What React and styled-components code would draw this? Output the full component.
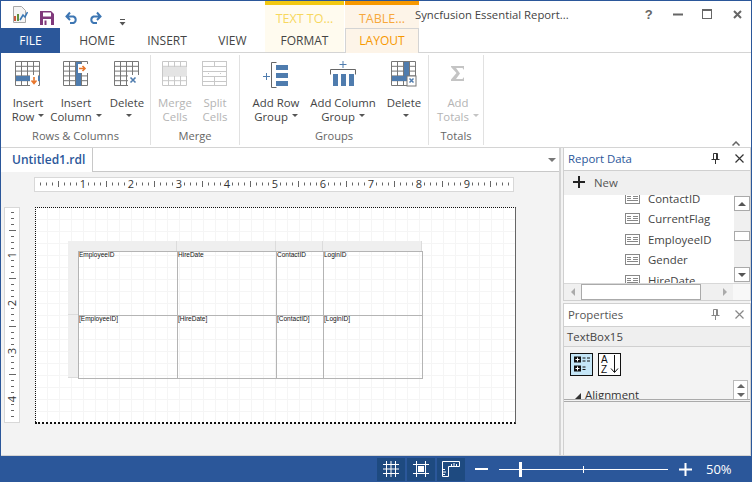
import React from 'react'
import styled, { createGlobalStyle } from 'styled-components'

const Global = createGlobalStyle`
	html, body { margin:0; padding:0; background:#fff; }
	body { font-family:"Open Sans","Noto Sans","Liberation Sans",sans-serif; }
`

const BLUE = '#2b579a'
const ICON = '#4f7cae'
const GRAY = '#777'

// ---- icons ----
const Grid = ({ x = 0.5, y = 0.5, w = 24, h = 24, cols = 4, rows = 5, color = GRAY }) => {
	const lines = []
	for (let i = 0; i <= cols; i++) lines.push(<line key={'c' + i} x1={x + (w * i) / cols} x2={x + (w * i) / cols} y1={y} y2={y + h} />)
	for (let i = 0; i <= rows; i++) lines.push(<line key={'r' + i} y1={y + (h * i) / rows} y2={y + (h * i) / rows} x1={x} x2={x + w} />)
	return <g stroke={color} strokeWidth="1">{lines}</g>
}

const InsertRowIcon = () => (
	<svg width="26" height="26">
		<Grid />
		<rect x="1" y="15" width="24" height="5" fill={ICON} />
		<rect x="15" y="14" width="8" height="11" fill="#fff" />
		<path d="M19 16v6M16.5 19.5L19 22.5l2.5-3" stroke="#e8762b" strokeWidth="1.6" fill="none" />
	</svg>
)
const InsertColIcon = () => (
	<svg width="26" height="26">
		<Grid />
		<rect x="13" y="1" width="5" height="24" fill={ICON} />
		<rect x="15" y="3" width="10" height="9" fill="#fff" />
		<path d="M16 7.5h6M19.5 5l2.5 2.5-2.5 2.5" stroke="#e8762b" strokeWidth="1.6" fill="none" />
	</svg>
)
const DeleteCellIcon = () => (
	<svg width="26" height="26">
		<Grid />
		<rect x="14" y="14" width="11" height="11" fill="#fff" />
		<path d="M16.5 16.5l5 5M21.5 16.5l-5 5" stroke={ICON} strokeWidth="1.6" />
	</svg>
)
const MergeIcon = () => (
	<svg width="26" height="26">
		<Grid color="#c8c8c8" />
		<rect x="1" y="6" width="24" height="9" fill="#e4e4e4" />
	</svg>
)
const SplitIcon = () => (
	<svg width="26" height="26">
		<g stroke="#c8c8c8" fill="none">
			<rect x="0.5" y="0.5" width="24" height="24" />
			<path d="M0 5.5h24M0 10.5h24M0 15.5h24M0 20.5h24M12.5 0v5M12.5 15v10M6.5 12v1M18.5 12v1" />
		</g>
	</svg>
)
const RowGroupIcon = () => (
	<svg width="26" height="28">
		<path d="M0 15.5h7M3.5 12v7" stroke={ICON} fill="none" />
		<path d="M13.5 1.5h-5v25h5" stroke="#666" fill="none" />
		<rect x="13" y="4" width="12" height="5" fill={ICON} />
		<rect x="13" y="12" width="12" height="5" fill={ICON} />
		<rect x="13" y="20" width="12" height="5" fill={ICON} />
	</svg>
)
const ColGroupIcon = () => (
	<svg width="28" height="26">
		<path d="M14 0v7M10.5 3.5h7" stroke={ICON} fill="none" />
		<path d="M1.5 13.5v-5h25v5" stroke="#666" fill="none" />
		<rect x="4" y="13" width="5" height="12" fill={ICON} />
		<rect x="12" y="13" width="5" height="12" fill={ICON} />
		<rect x="20" y="13" width="5" height="12" fill={ICON} />
	</svg>
)
const DeleteGroupIcon = () => (
	<svg width="26" height="26">
		<Grid />
		<rect x="13" y="1" width="5" height="18" fill={ICON} />
		<rect x="1" y="15" width="15" height="5" fill={ICON} />
		<rect x="16" y="15" width="9" height="10" fill="#fff" stroke="#777" />
		<path d="M18.5 17.5l4 4M22.5 17.5l-4 4" stroke={ICON} strokeWidth="1.5" />
	</svg>
)
const SigmaIcon = () => (
	<svg width="16" height="22">
		<path transform="translate(0 4)" d="M1 1h13v4l-1.5-2H6l4 5.5L6 14h6.5L14 12v4H1v-1.5l5.5-6.5L1 2z" fill="#c4c4c4" />
	</svg>
)
const AppIcon = () => (
	<svg width="16" height="18">
		<path d="M1.5 0.5h8l4 4v12h-12z" fill="#f4f4f4" stroke="#a8a8a8" />
		<rect x="2" y="10" width="2" height="5" fill="#c9593a" />
		<rect x="5" y="8" width="2" height="7" fill="#5f8f3e" />
		<path d="M8 14l3-5 2 2 2.5-5" stroke="#3b78b5" strokeWidth="1.6" fill="none" />
	</svg>
)
const SaveIcon = () => (
	<svg width="14" height="14">
		<path d="M0 0h11l3 3v11H0z" fill="#80397b" />
		<rect x="3" y="1.5" width="8" height="4" fill="#fff" />
		<rect x="3" y="8" width="8" height="6" fill="#fff" />
		<rect x="4.5" y="9.5" width="2" height="4.5" fill="#80397b" />
	</svg>
)
const UndoIcon = ({ flip }) => (
	<svg width="14" height="13" style={flip ? { transform: 'scaleX(-1)' } : undefined}>
		<path d="M1.5 5.5h7a3.5 3.5 0 0 1 0 6.5H5M5 1.5L1.5 5.5 5 9" stroke="#3d76b3" strokeWidth="2" fill="none" />
	</svg>
)
const QatMore = () => (
	<svg width="7" height="7">
		<path d="M1 0.5h5" stroke="#555" />
		<path d="M0.5 3h6L3.5 6.5z" fill="#555" />
	</svg>
)
const Caption = () => (
	<>
		<CaptionBtn>
			<HelpMark>?</HelpMark>
		</CaptionBtn>
		<CaptionBtn>
			<svg width="10" height="3"><rect width="10" height="2" y="0.5" fill="#666" /></svg>
		</CaptionBtn>
		<CaptionBtn>
			<svg width="11" height="11"><rect x="0.5" y="0.5" width="9" height="9" fill="none" stroke="#666" /><rect width="10" height="2" fill="#666" /></svg>
		</CaptionBtn>
		<CaptionBtn>
			<svg width="9" height="9"><path d="M1 1l7 7M8 1l-7 7" stroke="#666" strokeWidth="2" /></svg>
		</CaptionBtn>
	</>
)
const Pin = ({ color = '#333' }) => (
	<svg width="9" height="11">
		<path d="M2.5 0.5h4v6h-4zM5.5 1v5.5M0.5 6.5h8M4.5 7v4" stroke={color} fill="none" />
	</svg>
)
const Cross = ({ color = '#333' }) => (
	<svg width="9" height="9"><path d="M0.5 0.5l8 8M8.5 0.5l-8 8" stroke={color} strokeWidth="1.2" /></svg>
)
const Tri = ({ dir = 'down', color = '#555', s = 3 }) => {
	const d = {
		down: `M0 0h${s * 2}L${s} ${s}z`,
		up: `M0 ${s}h${s * 2}L${s} 0z`,
		left: `M${s} 0v${s * 2}L0 ${s}z`,
		right: `M0 0v${s * 2}L${s} ${s}z`,
	}[dir]
	const sideways = dir === 'left' || dir === 'right'
	return <svg width={sideways ? s : s * 2} height={sideways ? s * 2 : s}><path d={d} fill={color} /></svg>
}
const FieldIcon = () => (
	<svg width="15" height="11">
		<rect x="0.5" y="0.5" width="14" height="10" fill="#fff" stroke="#888" />
		<path d="M2 3.5h4M8 3.5h5M2 5.5h4M8 5.5h5M2 7.5h11" stroke="#888" />
	</svg>
)
const CategoryIcon = () => (
	<svg width="21" height="20">
		<rect x="3" y="2.5" width="7" height="6" fill="#111" />
		<rect x="3" y="11.5" width="7" height="6" fill="#111" />
		<path d="M6.5 3.5v4M4.5 5.5h4M6.5 12.5v4M4.5 14.5h4" stroke="#fff" />
		<path d="M11.5 4h3M16 4h3M11.5 7h3M16 7h3M11.5 13h3M11.5 15.5h3" stroke="#111" />
	</svg>
)
const SortIcon = () => (
	<svg width="21" height="20">
		<text x="2" y="9" fontFamily="Liberation Sans" fontSize="10" fill="#111">A</text>
		<text x="2" y="19" fontFamily="Liberation Sans" fontSize="10" fill="#111">Z</text>
		<path d="M15.5 1v17M12 14.5l3.5 4 3.5-4" stroke="#111" fill="none" />
	</svg>
)
const GridLinesIcon = () => (
	<svg width="16" height="16">
		<path d="M3.5 0v16M8 0v16M12.5 0v16M0 3.5h16M0 8h16M0 12.5h16" stroke="#fff" strokeWidth="1" />
	</svg>
)
const SnapIcon = () => (
	<svg width="16" height="16">
		<path d="M3.5 0v16M12.5 0v16M0 3.5h16M0 12.5h16" stroke="#fff" />
		<rect x="5" y="5" width="6" height="6" fill="#fff" />
	</svg>
)
const RulerIcon = () => (
	<svg width="18" height="16">
		<path d="M0.5 0.5h17v5h-11v10h-6z" fill="none" stroke="#fff" />
		<path d="M9.5 3v2M12 2v3M14.5 3v2M1 8.5h2M1 11h3M1 13.5h2" stroke="#fff" />
	</svg>
)

const HRuler = () => {
	const ticks = []
	for (let i = 1; i < 80; i++) {
		const x = 6 * i - 1
		if (i % 8 === 0) continue
		ticks.push(<line key={i} x1={x + 0.5} x2={x + 0.5} y1={i % 4 === 0 ? 4 : 5.5} y2={i % 4 === 0 ? 10 : 8.5} stroke="#666" />)
	}
	return (
		<svg width="478" height="14">
			{ticks}
			{[1, 2, 3, 4, 5, 6, 7, 8, 9].map((n) => (
				<text key={n} x={48 * n} y="11" textAnchor="middle" fontFamily="Open Sans" fontSize="11" fill="#333">{n}</text>
			))}
		</svg>
	)
}
const VRuler = () => {
	const ticks = []
	for (let i = 1; i < 36; i++) {
		const y = 6 * i - 2
		if (i % 8 === 0) continue
		ticks.push(<line key={i} y1={y + 0.5} y2={y + 0.5} x1={i % 4 === 0 ? 4 : 6} x2={i % 4 === 0 ? 11 : 9} stroke="#666" />)
	}
	return (
		<svg width="14" height="214">
			{ticks}
			{[1, 2, 3, 4].map((n) => (
				<text key={n} transform={`translate(11 ${48 * n - 1}) rotate(-90)`} textAnchor="middle" fontFamily="Open Sans" fontSize="11" fill="#333">{n}</text>
			))}
		</svg>
	)
}

// ---- data ----
const groups = [
	{
		label: 'Rows & Columns', width: 150, pad: 3,
		items: [
			{ icon: <InsertRowIcon />, l1: 'Insert', l2: 'Row', caret: true, w: 48 },
			{ icon: <InsertColIcon />, l1: 'Insert', l2: 'Column', caret: true, w: 48 },
			{ icon: <DeleteCellIcon />, l1: 'Delete', l2: '', caret: true, w: 50, ml: 2 },
		],
	},
	{
		label: 'Merge', width: 89, off: true, pad: 2,
		items: [
			{ icon: <MergeIcon />, l1: 'Merge', l2: 'Cells', w: 44 },
			{ icon: <SplitIcon />, l1: 'Split', l2: 'Cells', w: 36 },
		],
	},
	{
		label: 'Groups', width: 189, pad: 6,
		items: [
			{ icon: <RowGroupIcon />, l1: 'Add Row', l2: 'Group', caret: true, w: 60 },
			{ icon: <ColGroupIcon />, l1: 'Add Column', l2: 'Group', caret: true, w: 74 },
			{ icon: <DeleteGroupIcon />, l1: 'Delete', l2: '', caret: true, w: 48 },
		],
	},
	{
		label: 'Totals', width: 55, off: true, pad: 5,
		items: [{ icon: <SigmaIcon />, l1: 'Add', l2: 'Totals', caret: true, w: 48 }],
	},
]
const fields = ['ContactID', 'CurrentFlag', 'EmployeeID', 'Gender', 'HireDate']
const cols = [
	{ w: 99, head: 'EmployeeID', bind: '[EmployeeID]' },
	{ w: 99, head: 'HireDate', bind: '[HireDate]' },
	{ w: 47, head: 'ContactID', bind: '[ContactID]' },
	{ w: 99, head: 'LoginID', bind: '[LoginID]' },
]

export default function App() {
	return (
		<Window>
			<Global />
			<TitleRow>
				<Qat>
					<QatSlot $w={28} $top={5}><AppIcon /></QatSlot>
					<QatSlot $w={25} $top={10}><SaveIcon /></QatSlot>
					<QatSlot $w={23} $top={10}><UndoIcon /></QatSlot>
					<QatSlot $w={31} $top={10}><UndoIcon flip /></QatSlot>
					<QatSlot $w={10} $top={13}><QatMore /></QatSlot>
				</Qat>
				<Context $bar="#f2c811" $bg="#fffbef" $color="#f7d85e" $w={79} $left={128}>TEXT TO...</Context>
				<Context $bar="#f79800" $bg="#fdf4e8" $color="#f7a83c" $w={74}>TABLE...</Context>
				<AppTitle>Syncfusion Essential Report...</AppTitle>
				<CaptionBox><Caption /></CaptionBox>
			</TitleRow>
			<TabRow>
				<FileTab>FILE</FileTab>
				<Tab $w={74}>HOME</Tab>
				<Tab $w={66}>INSERT</Tab>
				<Tab $w={65}>VIEW</Tab>
				<Tab $w={79} $bg="#fffbef">FORMAT</Tab>
				<ActiveTab>LAYOUT</ActiveTab>
			</TabRow>
			<Ribbon>
				{groups.map((g) => (
					<Group key={g.label} $w={g.width}>
						<GroupItems $pad={g.pad}>
							{g.items.map((it, i) => (
								<RibbonBtn key={i} $w={it.w} $ml={it.ml} $off={g.off}>
									<BtnIcon>{it.icon}</BtnIcon>
									<span>{it.l1}</span>
									<BtnLine>
										{it.l2}
										{it.caret && <Caret><Tri color={g.off ? '#c4c4c4' : '#555'} /></Caret>}
									</BtnLine>
								</RibbonBtn>
							))}
						</GroupItems>
						<GroupLabel>{g.label}</GroupLabel>
					</Group>
				))}
				<Collapse>
					<svg width="8" height="5"><path d="M0.5 4.5L4 1l3.5 3.5" stroke="#666" strokeWidth="1.5" fill="none" /></svg>
				</Collapse>
			</Ribbon>
			<Body>
				<Main>
					<DocBar>
						<DocTab>Untitled1.rdl</DocTab>
						<DocFill><Tri color="#777" s={4} /></DocFill>
					</DocBar>
					<Surface>
						<HRulerBox><HRuler /></HRulerBox>
						<SheetRow>
							<VRulerBox><VRuler /></VRulerBox>
							<Paper>
								<RdlTable>
									<ColHandles>
										<Corner />
										{cols.map((c) => <ColHandle key={c.head} $w={c.w} />)}
									</ColHandles>
									<RowBody>
										<RowHandles>
											<RowHandle $h={64} />
											<RowHandle $h={63} />
										</RowHandles>
										<Cells>
											<CellRow $h={64}>
												{cols.map((c) => <Cell key={c.head} $w={c.w}>{c.head}</Cell>)}
											</CellRow>
											<CellRow $h={63}>
												{cols.map((c) => <Cell key={c.bind} $w={c.w}>{c.bind}</Cell>)}
											</CellRow>
										</Cells>
									</RowBody>
								</RdlTable>
							</Paper>
						</SheetRow>
					</Surface>
				</Main>
				<Side>
					<Panel $h={153}>
						<PanelHead $active>
							<span>Report Data</span>
							<PanelBtns><Pin /><Cross /></PanelBtns>
						</PanelHead>
						<NewBar>
							<svg width="14" height="14"><path d="M7 1v12M1 7h12" stroke="#222" strokeWidth="2" /></svg>
							<span>New</span>
						</NewBar>
						<ListArea>
							<List>
								<FieldsWrap>
									{fields.map((f) => (
										<Field key={f}><FieldIcon /><span>{f}</span></Field>
									))}
								</FieldsWrap>
							</List>
							<VScroll>
								<ScrollBtn><Tri dir="up" s={4} /></ScrollBtn>
								<ScrollTrack><Thumb /></ScrollTrack>
								<ScrollBtn><Tri s={4} /></ScrollBtn>
							</VScroll>
						</ListArea>
						<HScroll>
							<HArrow $w={17}><Tri dir="left" color="#aaa" s={4} /></HArrow>
							<HThumb />
							<HGap />
							<HArrow $w={17}><Tri dir="right" color="#aaa" s={4} /></HArrow>
							<HCorner />
						</HScroll>
					</Panel>
					<Panel $h={152} $second>
						<PanelHead>
							<span>Properties</span>
							<PanelBtns><Pin color="#888" /><Cross color="#888" /></PanelBtns>
						</PanelHead>
						<ObjectName>TextBox15</ObjectName>
						<PropGrid>
							<PropTools>
								<PropTool $on><CategoryIcon /></PropTool>
								<PropTool><SortIcon /></PropTool>
							</PropTools>
							<PropRow>
								<PropCat>
									<svg width="7" height="7"><path d="M7 0v7H0z" fill="#333" /></svg>
									<span>Alignment</span>
								</PropCat>
								<MiniScroll>
									<MiniBtn><Tri dir="up" color="#666" s={4} /></MiniBtn>
									<MiniBtn><Tri color="#666" s={4} /></MiniBtn>
								</MiniScroll>
							</PropRow>
						</PropGrid>
						<PropHelp />
					</Panel>
				</Side>
			</Body>
			<StatusBar>
				<StatusBtn><GridLinesIcon /></StatusBtn>
				<StatusBtn><SnapIcon /></StatusBtn>
				<StatusBtn><RulerIcon /></StatusBtn>
				<ZoomMinus><svg width="13" height="3"><rect width="13" height="2" fill="#fff" /></svg></ZoomMinus>
				<Slider>
					<SliderThumb />
					<SliderMid />
				</Slider>
				<ZoomPlus>
					<svg width="13" height="13"><path d="M6.5 0v13M0 6.5h13" stroke="#fff" strokeWidth="2" /></svg>
				</ZoomPlus>
				<ZoomText>50%</ZoomText>
			</StatusBar>
		</Window>
	)
}

// ---- styles ----
const Window = styled.div`
	width:752px;
	height:482px;
	box-sizing:border-box;
	border-top:1px solid ${BLUE};
	border-left:1px solid ${BLUE};
	border-right:1px solid ${BLUE};
	display:flex;
	flex-direction:column;
	overflow:hidden;
	background:#fff;
	color:#444;
	font-size:11.4px;
`
const TitleRow = styled.div`
	height:27px;
	display:flex;
	flex-shrink:0;
`
const Qat = styled.div`
	display:flex;
	width:136px;
	flex-shrink:0;
	padding-left:11px;
	box-sizing:border-box;
`
const QatSlot = styled.div`
	width:${(p) => p.$w}px;
	flex-shrink:0;
	padding-top:${(p) => p.$top}px;
	box-sizing:border-box;
`
const Context = styled.div`
	width:${(p) => p.$w}px;
	flex-shrink:0;
	margin-left:${(p) => p.$left || 0}px;
	margin-right:1px;
	box-sizing:border-box;
	border-top:4px solid ${(p) => p.$bar};
	background:${(p) => p.$bg};
	color:${(p) => p.$color};
	font-size:12.5px;
	text-align:center;
	padding-top:5px;
`
const AppTitle = styled.div`
	width:229px;
	flex-shrink:0;
	margin-left:-5px;
	padding-top:6px;
	color:#444;
	font-size:11.3px;
	white-space:nowrap;
`
const CaptionBox = styled.div`
	display:flex;
	flex-shrink:0;
	width:118px;
	margin-left:-10px;
`
const CaptionBtn = styled.div`
	width:29.5px;
	height:26px;
	flex-shrink:0;
	display:flex;
	align-items:center;
	justify-content:center;
`
const HelpMark = styled.span`
	font-family:"Liberation Sans",sans-serif;
	font-weight:700;
	font-size:13px;
	line-height:13px;
	color:#666;
`
const TabRow = styled.div`
	height:24px;
	display:flex;
	flex-shrink:0;
	border-bottom:1px solid #d4d4d4;
`
const FileTab = styled.div`
	width:59px;
	height:25px;
	background:${BLUE};
	color:#fff;
	font-size:12px;
	line-height:25px;
	text-align:center;
`
const Tab = styled.div`
	width:${(p) => p.$w}px;
	background:${(p) => p.$bg || 'transparent'};
	font-size:12px;
	line-height:25px;
	text-align:center;
	color:#444;
	margin-right:${(p) => (p.$bg ? 1 : 0)}px;
`
const ActiveTab = styled.div`
	width:74px;
	box-sizing:border-box;
	height:25px;
	background:#fdf4e8;
	border:1px solid #d4d4d4;
	border-bottom:none;
	color:#f79800;
	font-size:12px;
	line-height:24px;
	text-align:center;
`
const Ribbon = styled.div`
	height:94px;
	display:flex;
	flex-shrink:0;
	position:relative;
	box-sizing:border-box;
	padding-top:2px;
`
const Group = styled.div`
	width:${(p) => p.$w}px;
	box-sizing:border-box;
	border-right:1px solid #e1e1e1;
	height:90px;
	display:flex;
	flex-direction:column;
	flex-shrink:0;
`
const GroupItems = styled.div`
	display:flex;
	flex:1;
	padding-left:${(p) => p.$pad}px;
`
const RibbonBtn = styled.div`
	width:${(p) => p.$w}px;
	margin-left:${(p) => p.$ml || 0}px;
	flex-shrink:0;
	display:flex;
	flex-direction:column;
	align-items:center;
	color:${(p) => (p.$off ? '#b4b4b4' : '#444')};
	line-height:14px;
	white-space:nowrap;
`
const BtnIcon = styled.div`
	height:41px;
	padding-top:6px;
	box-sizing:border-box;
	display:flex;
	align-items:flex-start;
`
const BtnLine = styled.div`
	display:flex;
	align-items:center;
	min-height:14px;
`
const Caret = styled.span`
	margin-left:4px;
	margin-bottom:3px;
	display:inline-flex;
`
const GroupLabel = styled.div`
	text-align:center;
	color:#666;
	font-size:11.1px;
	line-height:15px;
	padding-bottom:2px;
`
const Collapse = styled.div`
	position:absolute;
	right:11px;
	top:81px;
`
const Body = styled.div`
	flex:1;
	display:flex;
	min-height:0;
	border-top:1px solid #d4d4d4;
	border-bottom:1px solid #d4d4d4;
	background:#f3f3f3;
`
const Main = styled.div`
	width:560px;
	flex-shrink:0;
	display:flex;
	flex-direction:column;
	border-right:2px solid #d4d4d4;
	box-sizing:border-box;
`
const DocBar = styled.div`
	height:24px;
	display:flex;
	flex-shrink:0;
	background:#fff;
`
const DocTab = styled.div`
	width:92px;
	box-sizing:border-box;
	padding-left:11px;
	color:${BLUE};
	font-size:12px;
	line-height:23px;
	font-weight:600;
	border-right:1px solid #c8c8c8;
`
const DocFill = styled.div`
	flex:1;
	border-bottom:1px solid #c8c8c8;
	display:flex;
	align-items:center;
	justify-content:flex-end;
	padding-right:3px;
	background:#fff;
`
const Surface = styled.div`
	flex:1;
	display:flex;
	flex-direction:column;
	padding-top:5px;
`
const HRulerBox = styled.div`
	margin-left:33px;
	width:480px;
	height:15px;
	background:#fff;
	border:1px solid #d8d8d8;
	box-sizing:border-box;
	svg { display:block; margin-top:-1px; }
`
const SheetRow = styled.div`
	display:flex;
	margin-top:15px;
	padding-left:3px;
`
const VRulerBox = styled.div`
	width:16px;
	height:216px;
	background:#fff;
	border:1px solid #d8d8d8;
	box-sizing:border-box;
	svg { display:block; }
`
const Paper = styled.div`
	width:481px;
	height:217px;
	margin-left:15px;
	flex-shrink:0;
	box-sizing:border-box;
	position:relative;
	border-top:1px dotted #111;
	border-left:1px dotted #111;
	border-bottom:2px dotted #111;
	border-right:1px solid #666;
	background-color:#fff;
	background-image:linear-gradient(#f5f5f5 1px, transparent 1px), linear-gradient(90deg, #f5f5f5 1px, transparent 1px);
	background-size:12px 12px;
	background-position:-1px -1px;
`
const RdlTable = styled.div`
	position:absolute;
	left:32px;
	top:33px;
`
const ColHandles = styled.div`
	display:flex;
	height:10px;
`
const Corner = styled.div`
	width:10px;
	background:#efefef;
`
const ColHandle = styled.div`
	width:${(p) => p.$w}px;
	box-sizing:border-box;
	background:#efefef;
	border-right:1px solid #dcdcdc;
`
const RowBody = styled.div`
	display:flex;
`
const RowHandles = styled.div`
	width:10px;
	display:flex;
	flex-direction:column;
`
const RowHandle = styled.div`
	height:${(p) => p.$h}px;
	box-sizing:border-box;
	background:#efefef;
	border-bottom:1px solid #dcdcdc;
`
const Cells = styled.div`
	border-top:1px solid #b4b4b4;
	border-left:1px solid #b4b4b4;
`
const CellRow = styled.div`
	display:flex;
	height:${(p) => p.$h}px;
	box-sizing:border-box;
	border-bottom:1px solid #b4b4b4;
`
const Cell = styled.div`
	width:${(p) => p.$w}px;
	box-sizing:border-box;
	border-right:1px solid #b4b4b4;
	font-family:"Liberation Sans",sans-serif;
	font-size:6.5px;
	line-height:6px;
	color:#111;
	white-space:nowrap;
	overflow:hidden;
`
const Side = styled.div`
	width:188px;
	flex-shrink:0;
	margin-left:2px;
	display:flex;
	flex-direction:column;
`
const Panel = styled.div`
	height:${(p) => p.$h}px;
	margin-top:${(p) => (p.$second ? 2 : 0)}px;
	box-sizing:border-box;
	border:1px solid #d0d0d0;
	border-top:${(p) => (p.$second ? '1px solid #d0d0d0' : 'none')};
	border-bottom:${(p) => (p.$second ? 'none' : '1px solid #d0d0d0')};
	display:flex;
	flex-direction:column;
	background:#fff;
	overflow:hidden;
`
const PanelHead = styled.div`
	height:23px;
	flex-shrink:0;
	box-sizing:border-box;
	display:flex;
	align-items:center;
	justify-content:space-between;
	padding:0 6px 2px 4px;
	background:#fff;
	color:${(p) => (p.$active ? BLUE : '#555')};
	border-bottom:1px solid #d0d0d0;
`
const PanelBtns = styled.div`
	display:flex;
	align-items:center;
	gap:15px;
`
const NewBar = styled.div`
	height:24px;
	flex-shrink:0;
	box-sizing:border-box;
	padding:0 0 2px 8px;
	background:#f0f0f0;
	display:flex;
	align-items:center;
	gap:8px;
	color:#555;
`
const ListArea = styled.div`
	height:88px;
	flex-shrink:0;
	display:flex;
	overflow:hidden;
`
const List = styled.div`
	flex:1;
	overflow:hidden;
	background:#fff;
`
const FieldsWrap = styled.div`
	margin-top:-7px;
	padding-left:61px;
`
const Field = styled.div`
	height:20.5px;
	display:flex;
	align-items:center;
	gap:8px;
	color:#444;
`
const VScroll = styled.div`
	width:16px;
	display:flex;
	flex-direction:column;
	background:#f0f0f0;
`
const ScrollBtn = styled.div`
	height:15px;
	box-sizing:border-box;
	background:#fff;
	border:1px solid #aaa;
	display:flex;
	align-items:center;
	justify-content:center;
	flex-shrink:0;
	margin:1px 0;
`
const ScrollTrack = styled.div`
	flex:1;
	padding-top:19px;
`
const Thumb = styled.div`
	height:10px;
	background:#fff;
	border:1px solid #aaa;
	box-sizing:border-box;
`
const HScroll = styled.div`
	height:17px;
	flex-shrink:0;
	display:flex;
	background:#f0f0f0;
	border-top:1px solid #d8d8d8;
	box-sizing:border-box;
`
const HArrow = styled.div`
	width:${(p) => p.$w}px;
	display:flex;
	align-items:center;
	justify-content:center;
`
const HThumb = styled.div`
	width:120px;
	background:#fff;
	border:1px solid #aaa;
	box-sizing:border-box;
`
const HGap = styled.div`
	width:15px;
`
const HCorner = styled.div`
	flex:1;
	background:#f8f8f8;
`
const ObjectName = styled.div`
	height:20px;
	flex-shrink:0;
	background:#efefef;
	line-height:19px;
	padding-left:3px;
	color:#444;
	border-bottom:1px solid #d0d0d0;
	box-sizing:border-box;
`
const PropGrid = styled.div`
	height:52px;
	flex-shrink:0;
	background:#f3f3f3;
	overflow:hidden;
	position:relative;
	border-bottom:3px double #aaa;
`
const PropTools = styled.div`
	display:flex;
	gap:5px;
	padding:6px 0 0 6px;
`
const PropTool = styled.div`
	width:23px;
	height:23px;
	box-sizing:border-box;
	border:1px solid #111;
	background:${(p) => (p.$on ? '#c5e6f7' : '#fff')};
	svg { display:block; }
`
const PropRow = styled.div`
	display:flex;
	justify-content:space-between;
	align-items:flex-start;
	margin-top:4px;
`
const PropCat = styled.div`
	display:flex;
	align-items:center;
	gap:4px;
	padding-left:10px;
	margin-top:7px;
	color:#333;
	svg { margin-top:3px; }
`
const MiniScroll = styled.div`
	width:15px;
	margin-right:2px;
	border:1px solid #bbb;
	border-bottom:none;
	box-sizing:border-box;
`
const MiniBtn = styled.div`
	height:9px;
	display:flex;
	align-items:center;
	justify-content:center;
	background:#fff;
`
const PropHelp = styled.div`
	flex:1;
	background:#f3f3f3;
`
const StatusBar = styled.div`
	height:26px;
	flex-shrink:0;
	background:${BLUE};
	margin:0 -1px;
	display:flex;
	align-items:center;
	padding-left:377px;
	position:relative;
	color:#fff;
`
const StatusBtn = styled.div`
	width:28px;
	height:23px;
	margin-right:2px;
	background:#1e4a80;
	display:flex;
	align-items:center;
	justify-content:center;
`
const ZoomMinus = styled.div`
	margin-left:8px;
	width:24px;
	display:flex;
	align-items:center;
`
const Slider = styled.div`
	width:169px;
	height:1px;
	background:#fff;
	position:relative;
`
const SliderThumb = styled.div`
	position:absolute;
	left:20px;
	top:-7px;
	width:3px;
	height:15px;
	background:#fff;
`
const SliderMid = styled.div`
	position:absolute;
	left:84px;
	top:-3px;
	width:1px;
	height:7px;
	background:#fff;
`
const ZoomPlus = styled.div`
	margin-left:11px;
	display:flex;
`
const ZoomText = styled.div`
	margin-left:14px;
	font-size:13px;
`
